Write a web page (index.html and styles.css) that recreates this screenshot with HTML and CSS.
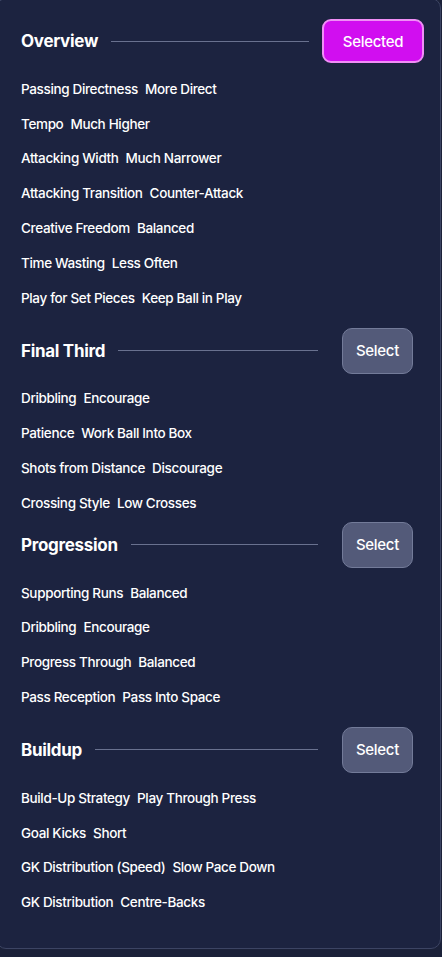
FILE: index.html
```html
<!DOCTYPE html>
<html>
<head>
<meta charset="utf-8">
<link rel="stylesheet" href="styles.css">
</head>
<body>
<div class="panel">
  <section class="section section--first">
    <div class="head">
      <h2 class="title">Overview</h2>
      <div class="rule rule--sel"></div>
      <button class="btn btn--selected">Selected</button>
    </div>
    <ul class="list">
      <li><span>Passing Directness</span><span>More Direct</span></li>
      <li><span>Tempo</span><span>Much Higher</span></li>
      <li><span>Attacking Width</span><span>Much Narrower</span></li>
      <li><span>Attacking Transition</span><span>Counter-Attack</span></li>
      <li><span>Creative Freedom</span><span>Balanced</span></li>
      <li><span>Time Wasting</span><span>Less Often</span></li>
      <li><span>Play for Set Pieces</span><span>Keep Ball in Play</span></li>
    </ul>
  </section>
  <section class="section">
    <div class="head">
      <h2 class="title">Final Third</h2>
      <div class="rule"></div>
      <button class="btn">Select</button>
    </div>
    <ul class="list">
      <li><span>Dribbling</span><span>Encourage</span></li>
      <li><span>Patience</span><span>Work Ball Into Box</span></li>
      <li><span>Shots from Distance</span><span>Discourage</span></li>
      <li><span>Crossing Style</span><span>Low Crosses</span></li>
    </ul>
  </section>
  <section class="section section--tight">
    <div class="head">
      <h2 class="title">Progression</h2>
      <div class="rule"></div>
      <button class="btn">Select</button>
    </div>
    <ul class="list">
      <li><span>Supporting Runs</span><span>Balanced</span></li>
      <li><span>Dribbling</span><span>Encourage</span></li>
      <li><span>Progress Through</span><span>Balanced</span></li>
      <li><span>Pass Reception</span><span>Pass Into Space</span></li>
    </ul>
  </section>
  <section class="section">
    <div class="head">
      <h2 class="title">Buildup</h2>
      <div class="rule"></div>
      <button class="btn">Select</button>
    </div>
    <ul class="list">
      <li><span>Build-Up Strategy</span><span>Play Through Press</span></li>
      <li><span>Goal Kicks</span><span>Short</span></li>
      <li><span>GK Distribution (Speed)</span><span>Slow Pace Down</span></li>
      <li><span>GK Distribution</span><span>Centre-Backs</span></li>
    </ul>
  </section>
</div>
</body>
</html>
```
FILE: styles.css
```css
* { box-sizing: border-box; }
html, body {
  margin: 0;
  padding: 0;
  background: #1b2139;
  overflow: hidden;
}
body {
  font-family: Inter, "Noto Sans", sans-serif;
  color: #ffffff;
}
.panel {
  margin: -2px 1px 0 -4px;
  height: 951px;
  background: #1c2340;
  border: 1px solid #3c4463;
  border-radius: 10px;
  padding: 19px 16px 0 24px;
}
.section { margin-top: 12.5px; }
.section--first { margin-top: 0; }
.section--tight { margin-top: 1.5px; }
.head {
  display: flex;
  align-items: center;
  height: 46px;
}
.title {
  margin: 0;
  font-size: 17px;
  font-weight: 700;
  letter-spacing: -0.3px;
  white-space: nowrap;
}
.rule {
  flex: 1;
  height: 1px;
  background: #69718f;
  margin: 0 24px 0 13px;
}
.rule--sel { margin-right: 13px; }
.btn {
  font-family: Inter, "Noto Sans", sans-serif;
  font-size: 15px;
  font-weight: 500;
  letter-spacing: -0.3px;
  color: #ffffff;
  width: 71px;
  height: 46px;
  margin-right: 11px;
  background: #535a79;
  border: 1px solid #737b99;
  border-radius: 10px;
  padding: 0;
}
.btn--selected {
  width: 102px;
  height: 44px;
  margin-right: 0;
  background: #d10ef0;
  border: 2px solid #f08ef6;
  border-radius: 9px;
}
.list {
  list-style: none;
  margin: 7.5px 0 0;
  padding: 0;
}
.list li {
  height: 34.8px;
  display: flex;
  align-items: center;
  gap: 7px;
  font-size: 13.5px;
  font-weight: 500;
  letter-spacing: -0.35px;
  white-space: nowrap;
}
```
